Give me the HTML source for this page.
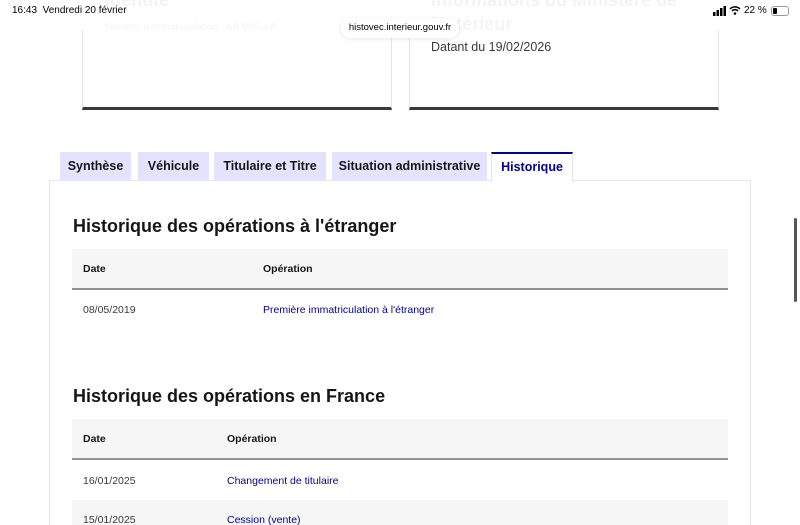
<!DOCTYPE html>
<html><head><meta charset="utf-8"><style>
*{margin:0;padding:0;box-sizing:border-box}
html,body{width:800px;height:525px;overflow:hidden}
body{background:#fff;font-family:"Liberation Sans",sans-serif;position:relative;color:#161616}
.abs{position:absolute}
.card{position:absolute;top:30px;height:80px;border-left:1px solid #e5e5e5;border-right:1px solid #e5e5e5;border-bottom:3px solid #3a3a3a}
.tab{position:absolute;top:152px;height:29px;background:#e3e3fd;font-size:12.5px;font-weight:bold;line-height:29px;text-align:center;color:#161616}
.panel{position:absolute;left:49px;top:180px;width:702px;height:360px;border:1px solid #e5e5e5}
h2{position:absolute;left:73px;font-size:18px;font-weight:bold}
.th{position:absolute;left:72px;width:656px;height:41px;background:#f6f6f6;border-bottom:2px solid #929292;font-size:10.5px;font-weight:bold}
.th span,.row span{position:absolute;top:14px}
.row{position:absolute;left:72px;width:656px;height:40px;font-size:10.5px;color:#3a3a3a}
.row a{color:#000091;text-decoration:none}
</style></head><body>
<div class="abs" style="left:105px;top:-10px;font-size:18px;font-weight:bold;color:#f3f3f3">Identité</div>
<div class="abs" style="left:105px;top:22px;font-size:10px;color:#f4f4f4">Numéro d'immatriculation : AA-000-AA</div>
<div class="abs" style="left:431px;top:-10px;font-size:18px;font-weight:bold;color:#f3f3f3">Informations du Ministère de</div>
<div class="abs" style="left:431px;top:14px;font-size:18px;font-weight:bold;color:#f4f4f4">l'Intérieur</div>
<div class="card" style="left:82px;width:310px"></div>
<div class="card" style="left:409px;width:310px"></div>
<div class="abs" style="left:431px;top:40px;font-size:12.5px;color:#3a3a3a">Datant du 19/02/2026</div>
<div class="abs" style="left:12px;top:5px;font-size:10px;color:#000">16:43&nbsp; Vendredi 20 février</div>
<svg class="abs" style="left:713px;top:6px" width="14" height="10"><rect x="0" y="6" width="2.5" height="4" fill="#000"/><rect x="3.5" y="4" width="2.5" height="6" fill="#000"/><rect x="7" y="2" width="2.5" height="8" fill="#000"/><rect x="10.5" y="0" width="2.5" height="10" fill="#000"/></svg>
<svg class="abs" style="left:729px;top:5px" width="12" height="10"><path d="M1 4a7 7 0 0 1 10 0M3 6a4 4 0 0 1 6 0" stroke="#000" stroke-width="1.5" fill="none"/><circle cx="6" cy="8.5" r="1.3" fill="#000"/></svg>
<div class="abs" style="left:744px;top:5px;font-size:10px;color:#000">22 %</div>
<div class="abs" style="left:771px;top:6px;width:18px;height:10px;border:1px solid #999;border-radius:3px"><div style="width:4px;height:6px;margin:1px;background:#000;border-radius:1px"></div></div>
<div class="abs" style="left:341px;top:18px;width:118px;height:20px;background:#fff;border-radius:10px;box-shadow:0 1px 4px rgba(0,0,0,.1);font-size:9.5px;line-height:20px;text-align:center;color:#000">histovec.interieur.gouv.fr</div>
<div class="panel"></div>
<div class="tab" style="left:60px;width:71px">Synthèse</div>
<div class="tab" style="left:138px;width:71px">Véhicule</div>
<div class="tab" style="left:214px;width:112px">Titulaire et Titre</div>
<div class="tab" style="left:332px;width:155px">Situation administrative</div>
<div class="tab" style="left:491px;width:82px;background:#fff;border:1px solid #e5e5e5;border-top:2px solid #000091;border-bottom:none;height:30px;color:#000091;line-height:27px">Historique</div>
<h2 style="top:216px">Historique des opérations à l'étranger</h2>
<div class="th" style="top:249px"><span style="left:11px">Date</span><span style="left:191px">Opération</span></div>
<div class="row" style="top:290px"><span style="left:11px">08/05/2019</span><span style="left:191px"><a>Première immatriculation à l'étranger</a></span></div>
<h2 style="top:386px">Historique des opérations en France</h2>
<div class="th" style="top:419px"><span style="left:11px">Date</span><span style="left:155px">Opération</span></div>
<div class="row" style="top:461px"><span style="left:11px">16/01/2025</span><span style="left:155px"><a>Changement de titulaire</a></span></div>
<div class="row" style="top:500px;background:#f6f6f6"><span style="left:11px">15/01/2025</span><span style="left:155px"><a>Cession (vente)</a></span></div>
<div class="abs" style="left:794px;top:218px;width:3px;height:84px;background:#555;border-radius:2px"></div>
</body></html>
